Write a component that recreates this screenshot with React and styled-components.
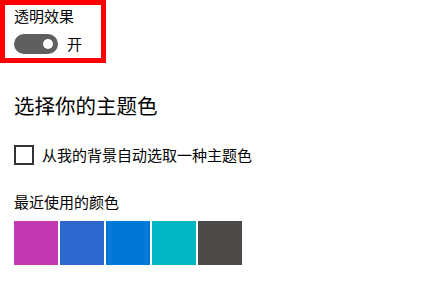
import React from "react";
import styled, { createGlobalStyle } from "styled-components";

const GlobalStyle = createGlobalStyle`
  body {
    margin: 0;
    background: #fff;
    font-family: "Noto Sans CJK SC", "Noto Sans", sans-serif;
    color: #000;
  }
`;

const recentColors = ["#C239B3", "#2E67CD", "#0078D7", "#00B7C3", "#4C4A48"];

export default function App() {
  return (
    <Page>
      <GlobalStyle />
      <Highlight>
        <Label>透明效果</Label>
        <ToggleRow>
          <Toggle>
            <Knob />
          </Toggle>
          <ToggleText>开</ToggleText>
        </ToggleRow>
      </Highlight>
      <Section>
        <Heading>选择你的主题色</Heading>
        <CheckRow>
          <CheckBox />
          <CheckText>从我的背景自动选取一种主题色</CheckText>
        </CheckRow>
        <Label className="recent">最近使用的颜色</Label>
        <Swatches>
          {recentColors.map((c) => (
            <Swatch key={c} color={c} />
          ))}
        </Swatches>
      </Section>
    </Page>
  );
}

const Page = styled.div`
  display: flex;
  flex-direction: column;
  width: 437px;
  height: 288px;
  overflow: hidden;
`;

const Highlight = styled.div`
  display: flex;
  flex-direction: column;
  box-sizing: border-box;
  width: 106px;
  height: 63px;
  border: 5px solid #ff0000;
  padding: 1px 9px 0 9px;
`;

const Label = styled.div`
  font-size: 15px;
  line-height: 20px;

  &.recent {
    margin-top: 27px;
  }
`;

const ToggleRow = styled.div`
  display: flex;
  align-items: center;
  gap: 9px;
  margin-top: 8px;
`;

const Toggle = styled.div`
  display: flex;
  align-items: center;
  justify-content: flex-end;
  box-sizing: border-box;
  width: 44px;
  height: 20px;
  border-radius: 10px;
  background: #5f5f5f;
  padding-right: 5px;
`;

const Knob = styled.div`
  width: 10px;
  height: 10px;
  border-radius: 50%;
  background: #fff;
`;

const ToggleText = styled.span`
  font-size: 15px;
  line-height: 20px;
`;

const Section = styled.div`
  display: flex;
  flex-direction: column;
  padding-left: 14px;
`;

const Heading = styled.h2`
  margin: 28px 0 0;
  font-size: 20.5px;
  font-weight: 400;
  line-height: 28px;
`;

const CheckRow = styled.div`
  display: flex;
  align-items: center;
  gap: 8px;
  margin-top: 26px;
`;

const CheckBox = styled.div`
  box-sizing: border-box;
  width: 20px;
  height: 20px;
  border: 2px solid #333;
`;

const CheckText = styled.span`
  font-size: 15px;
  line-height: 20px;
`;

const Swatches = styled.div`
  display: flex;
  gap: 2px;
  margin-top: 9px;
`;

const Swatch = styled.div`
  width: 44px;
  height: 44px;
  background: ${(p) => p.color};
`;
